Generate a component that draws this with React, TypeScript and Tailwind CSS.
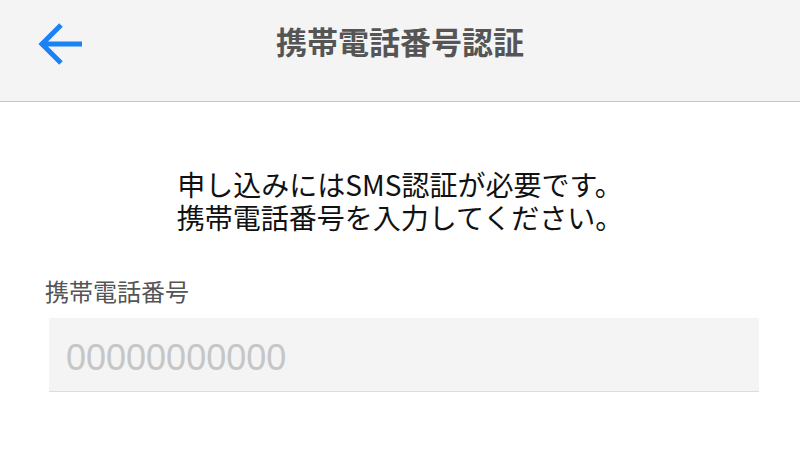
const jp = '"Noto Sans CJK JP", "Noto Sans", sans-serif';

function BackArrow() {
  return (
    <svg width="50" height="44" viewBox="0 0 50 44" fill="none" aria-hidden="true">
      <path d="M47 22H6" stroke="#1a82f7" strokeWidth="5" />
      <path d="M26 3L7 22L26 41" stroke="#1a82f7" strokeWidth="5" strokeLinejoin="miter" />
    </svg>
  );
}

export default function App() {
  return (
    <div className="w-[800px] h-[450px] bg-white overflow-hidden" style={{ fontFamily: jp }}>
      {/* Header */}
      <header className="h-[102px] bg-[#f4f4f4] border-b border-[#c6c6c6]">
        <div className="grid grid-cols-[1fr_auto_1fr] items-center h-[86px]">
          <button className="justify-self-start pl-[35px] pt-[2px]" aria-label="戻る">
            <BackArrow />
          </button>
          <h1 className="text-[31px] font-bold text-[#555555] leading-none pb-[6px]">携帯電話番号認証</h1>
          <div />
        </div>
      </header>

      {/* Message */}
      <p className="mt-[66px] text-center text-[28px] leading-[33px] text-[#111111]">
        申し込みにはSMS認証が必要です。
        <br />
        携帯電話番号を入力してください。
      </p>

      {/* Phone field */}
      <label className="block mt-[43px] pl-[45px] text-[24px] leading-[28px] text-[#555555]">
        携帯電話番号
      </label>
      <div className="mt-[13px] ml-[49px] mr-[41px] h-[74px] bg-[#f4f4f4] border-b border-[#dddddd] flex items-center pl-[17px] pt-[6px]">
        <input
          className="w-full bg-transparent outline-none text-[36px] text-[#333] placeholder:text-[#c6c6c6]"
          style={{ fontFamily: '"Liberation Sans", Arial, sans-serif' }}
          placeholder="00000000000"
          inputMode="numeric"
        />
      </div>
    </div>
  );
}
